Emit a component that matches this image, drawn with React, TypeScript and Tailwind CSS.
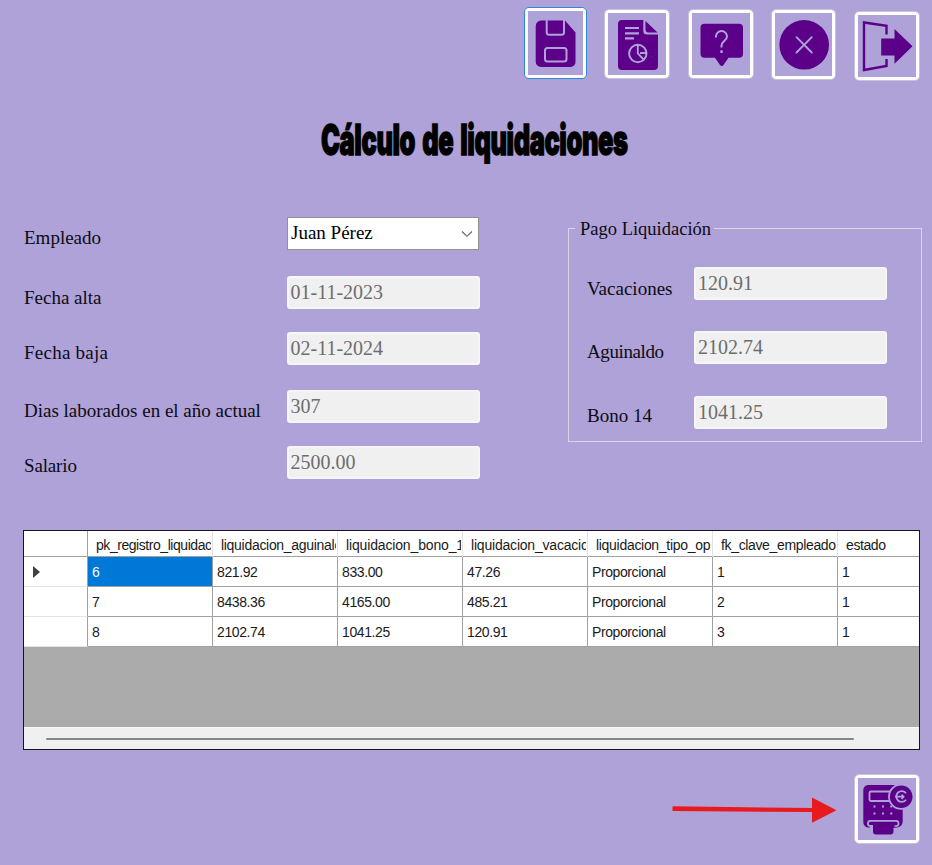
import type { ReactNode } from "react";

const INK = "#5c008a";
const BG = "#aea2d8";

function IconButton({
  box,
  className,
  focused = false,
  label,
  children,
}: {
  box: string;
  className: string;
  focused?: boolean;
  label: string;
  children: ReactNode;
}) {
  const ring = focused ? "border-[#2f87d8]" : "border-[#c9c4d4]";
  return (
    <button
      aria-label={label}
      className={`block shrink-0 overflow-hidden rounded-[5px] border bg-[#aea2d8] ${ring} ${className}`}
    >
      <span className="block h-full w-full rounded-[3px] border-[3px] border-[#fdfdfd]">
        <svg viewBox={box} className="block h-full w-full" fill={INK}>
          {children}
        </svg>
      </span>
    </button>
  );
}

const employeeFields = [
  { label: "Fecha alta", value: "01-11-2023", row: "h-[56px]", pad: "pt-[10px]", track: "" },
  { label: "Fecha baja", value: "02-11-2024", row: "h-[58px]", pad: "pt-[9px]", track: "tracking-[0.25px]" },
  { label: "Dias laborados en el año actual", value: "307", row: "h-[56px]", pad: "pt-[9px]", track: "" },
  { label: "Salario", value: "2500.00", row: "h-[33px]", pad: "pt-[8px]", track: "tracking-[-0.15px]" },
];

const paymentFields = [
  { label: "Vacaciones", value: "120.91", row: "h-[64px]", pad: "pt-[10px]", track: "" },
  { label: "Aguinaldo", value: "2102.74", row: "h-[65px]", pad: "pt-[9px]", track: "tracking-[-0.4px]" },
  { label: "Bono 14", value: "1041.25", row: "h-[33px]", pad: "pt-[8px]", track: "" },
];

const columns = [
  { name: "pk_registro_liquidac", track: "tracking-[-0.45px]" },
  { name: "liquidacion_aguinalc", track: "tracking-[-0.3px]" },
  { name: "liquidacion_bono_1", track: "tracking-[-0.15px]" },
  { name: "liquidacion_vacacic", track: "tracking-[-0.2px]" },
  { name: "liquidacion_tipo_op", track: "tracking-[-0.3px]" },
  { name: "fk_clave_empleado", track: "tracking-[-0.35px]" },
  { name: "estado", track: "tracking-[-0.4px]" },
];

const rows = [
  ["6", "821.92", "833.00", "47.26", "Proporcional", "1", "1"],
  ["7", "8438.36", "4165.00", "485.21", "Proporcional", "2", "1"],
  ["8", "2102.74", "1041.25", "120.91", "Proporcional", "3", "1"],
];

function DisabledInput({ value }: { value: string }) {
  return (
    <div className="h-[33px] w-[193px] shrink-0 rounded-[3px] border-2 border-[#f6f5f8] bg-[#f0f0f0] pl-[2px] text-[20px] leading-[29px] text-[#6d6d6d]">
      {value}
    </div>
  );
}

function Toolbar() {
  return (
    <header className="flex h-[84px] items-start pl-[524px]">
      <IconButton label="Guardar" focused box="528 11 55 64" className="mt-[7px] h-[72px] w-[63px]">
        <path d="M541 20.5H565l10.5 12V62a5 5 0 0 1-5 5H541a5.300 5.300 0 0 1-5.300-5V26a5.500 5.500 0 0 1 5.300-5.500z" />
        <path d="M546.700 19v13.200a2.500 2.500 0 0 0 2.500 2.500h12.300a2.500 2.500 0 0 0 2.500-2.500V19" fill="none" stroke={BG} strokeWidth="2" />
        <rect x="545" y="48" width="21.500" height="13.500" rx="2.500" fill="none" stroke={BG} strokeWidth="2" />
      </IconButton>
      <IconButton label="Reporte" box="608 13 58 62" className="ml-[17px] mt-[9px] h-[70px] w-[66px]">
        <path d="M622 20h21.300v11a3.500 3.500 0 0 0 3.500 3.500H658V66a4 4 0 0 1-4 4h-32a4 4 0 0 1-4-4V24a4 4 0 0 1 4-4z" />
        <path d="M645.500 21l12 11.500h-9a3 3 0 0 1-3-3z" />
        <path d="M625 28h14M625 33.300h14M625 38.400h9" fill="none" stroke={BG} strokeWidth="2.200" />
        <circle cx="637.800" cy="53.500" r="8.700" fill="none" stroke={BG} strokeWidth="2" />
        <path d="M637.800 45v8.500l5.800 6M640 53h6" fill="none" stroke={BG} strokeWidth="1.800" />
      </IconButton>
      <IconButton label="Ayuda" box="692 13 58 62" className="ml-[18px] mt-[9px] h-[70px] w-[66px]">
        <path d="M704.500 23.700h34.500a4 4 0 0 1 4 4v26a4 4 0 0 1-4 4h-10.500l-5 7.300q-1.500 2-3.500 0l-5-7.300h-10.500a4 4 0 0 1-4-4v-26a4 4 0 0 1 4-4z" />
        <path d="M716 37.500v-1a5.500 5.500 0 0 1 11 0c0 4-5.500 5-5.500 9v2" fill="none" stroke={BG} strokeWidth="2" />
        <rect x="720.300" y="50.300" width="2.400" height="2.700" fill={BG} />
      </IconButton>
      <IconButton label="Cancelar" box="775 13 57 63" className="ml-[17px] mt-[9px] h-[71px] w-[65px]">
        <circle cx="804.200" cy="44.800" r="24.800" />
        <path d="M796.500 37.200l15.300 15.300M811.800 37.200l-15.300 15.300" stroke={BG} strokeWidth="1.900" strokeLinecap="round" />
      </IconButton>
      <IconButton label="Salir" box="858.500 15 58 62" className="ml-[18px] mt-[11px] h-[70px] w-[66px]">
        <path d="M887 34.500V25.800L864.500 22.500V70L887 66v-7" fill="none" stroke={INK} strokeWidth="2.400" />
        <path d="M881.700 38.500h13.300V29l18 17.300-18 17.400V55.500h-13.300z" />
      </IconButton>
    </header>
  );
}

function EmployeeForm() {
  return (
    <div className="w-[456px]">
      <div className="flex h-[60px] items-start">
        <label className="w-[263px] pt-[10px] text-[19px] leading-[24px] text-[#0d0b12]">Empleado</label>
        <div className="mt-px flex h-[33px] w-[192px] items-start justify-between border border-[#929292] bg-white pl-[3px] pr-[5px] text-[19px] leading-[30px] text-black">
          <span>Juan Pérez</span>
          <svg viewBox="0 0 12 8" className="mt-[12px] h-[8px] w-[12px]" fill="none" stroke="#606060" strokeWidth="1.1">
            <path d="M1 1.500l5 4.800 5-4.800" />
          </svg>
        </div>
      </div>
      {employeeFields.map((f) => (
        <div key={f.label} className={`flex items-start ${f.row}`}>
          <label className={`w-[262.500px] shrink-0 whitespace-nowrap text-[19px] leading-[24px] text-[#0d0b12] ${f.track} ${f.pad}`}>{f.label}</label>
          <DisabledInput value={f.value} />
        </div>
      ))}
    </div>
  );
}

function PaymentGroup() {
  return (
    <fieldset className="h-[227px] w-[354px] border border-[#d9d4e8] pl-[18px]">
      <legend className="-ml-[12px] h-[26px] pl-[5px] pr-[3px] text-[18.500px] leading-[28px] text-[#0d0b12]">Pago Liquidación</legend>
      <div className="pt-[26px]">
        {paymentFields.map((f) => (
          <div key={f.label} className={`flex items-start ${f.row}`}>
            <label className={`w-[107px] shrink-0 text-[19px] leading-[24px] text-[#0d0b12] ${f.track} ${f.pad}`}>{f.label}</label>
            <DisabledInput value={f.value} />
          </div>
        ))}
      </div>
    </fieldset>
  );
}

function DataGrid() {
  return (
    <section className="ml-[23px] h-[220px] w-[897px] overflow-hidden border border-[#17151c] bg-[#ababab] font-['Liberation_Sans',Arial,sans-serif] text-[14px] tracking-[-0.4px] text-[#1a1a1a]">
      <div className="grid h-[26px] w-[1001px] grid-cols-[64px_repeat(7,125px)] border-b border-[#a0a0a0] bg-white">
        <div className="border-r border-[#a0a0a0]" />
        {columns.map((c) => (
          <div key={c.name} className="border-r border-[#e2e2e2] pl-[8px] leading-[29px]">
            <div className={`w-[115px] overflow-hidden whitespace-nowrap ${c.track}`}>{c.name}</div>
          </div>
        ))}
      </div>
      {rows.map((r, i) => (
        <div key={r[0]} className="grid h-[30px] w-[1001px] grid-cols-[64px_repeat(7,125px)] bg-white">
          <div className="flex items-center border-b border-r border-b-[#e4e4e4] border-r-[#a0a0a0] pl-[9px]">
            {i === 0 && (
              <svg viewBox="0 0 8 12" className="h-[12px] w-[8px]" fill="#404040">
                <path d="M0 0l7 6-7 6z" />
              </svg>
            )}
          </div>
          {r.map((v, j) => (
            <div
              key={j}
              className={`h-[30px] border-b border-r border-[#a0a0a0] pl-[4px] leading-[30px] ${i === 0 && j === 0 ? "bg-[#0078d7] text-white" : ""}`}
            >
              {v}
            </div>
          ))}
        </div>
      ))}
      <div className="mt-[80px] h-[22px] border-t border-[#f8f8f8] bg-[#f0f0f0] pl-[22px] pt-[10px]">
        <div className="h-[2px] w-[808px] rounded-full bg-[#868686]" />
      </div>
    </section>
  );
}

export default function App() {
  return (
    <main className="h-[865px] w-[932px] overflow-hidden bg-[#aea2d8] font-['Liberation_Serif','Times_New_Roman',serif]">
      <Toolbar />
      <div className="flex h-[132px] pl-[321px] pt-[30px]">
        <h1 className="h-[50px] w-[307px] origin-left scale-x-[0.606] whitespace-nowrap font-['Inter',Impact,sans-serif] text-[42px] font-black leading-[52px] tracking-[-0.7px] text-black [-webkit-text-stroke:1.400px_black] [word-spacing:4px]">
          Cálculo de liquidaciones
        </h1>
      </div>
      <div className="flex h-[314px] items-start pl-[24px]">
        <EmployeeForm />
        <div className="-mt-px ml-[88px]">
          <PaymentGroup />
        </div>
      </div>
      <DataGrid />
      <footer className="flex items-start pl-[672px] pt-[24px]">
        <svg viewBox="672 795 166 30" className="mt-[21px] h-[30px] w-[166px] shrink-0" fill="#e81a1e">
          <path d="M672.500 806.300L812 808v-10.500l24.500 12.800-24.500 12.500V812l-139.500-1z" />
        </svg>
        <IconButton label="Imprimir liquidación" box="858 778 58 62" className="ml-[16px] h-[70px] w-[66px]">
          <path d="M868 785h31v36a6 6 0 0 1-4 6.500h-3v-3.500a4 4 0 0 0-2-3h-18a4 4 0 0 0-2 3v3.500h-2a5.500 5.500 0 0 1-4.700-6V790a5 5 0 0 1 4.700-5z" />
          <path d="M893 805h9.700v16.500a6 6 0 0 1-6 6H893z" />
          <rect x="869.500" y="791.500" width="22" height="9.500" rx="1.500" fill="none" stroke={BG} strokeWidth="1.800" />
          <path d="M870 821h27v4h-3.500v6.500a3 3 0 0 1-3 3H876a3 3 0 0 1-3-3V825h-3z" />
          <path d="M872 826h-1.500a2.500 2.500 0 0 1 0-5.200h25.500a2.500 2.500 0 0 1 0 5.200h-1.500" fill="none" stroke={BG} strokeWidth="1.700" />
          <path d="M873.500 805.500h2v2h-2zM882 805.500h2v2h-2zM890.300 805.500h2v2h-2zM873.500 812.500h2v2h-2zM882 812.500h2v2h-2zM890.300 812.500h2v2h-2z" fill={BG} />
          <circle cx="901.200" cy="796.700" r="12.200" stroke={BG} strokeWidth="1.800" />
          <path d="M906 793.200a5.400 5.400 0 1 0 0 6.600M895 796.700h8M901.600 794.600l2 2.100-2 2.100" fill="none" stroke={BG} strokeWidth="1.800" />
        </IconButton>
      </footer>
    </main>
  );
}
